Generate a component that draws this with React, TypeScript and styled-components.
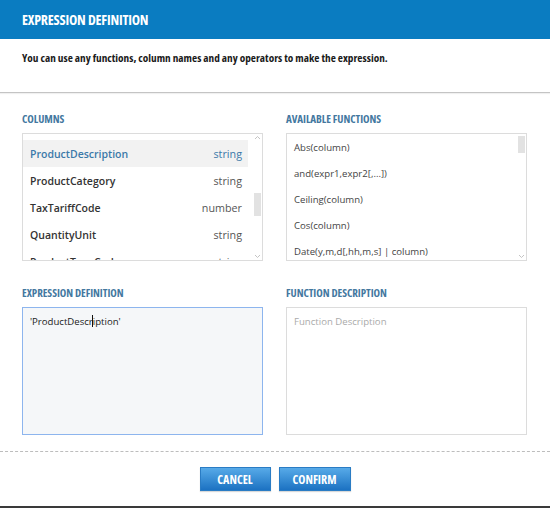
import React from "react";
import styled, { createGlobalStyle } from "styled-components";

const Global = createGlobalStyle`
  html, body { margin: 0; padding: 0; background: #fff; }
  body { font-family: "Open Sans", "Liberation Sans", sans-serif; }
  * { box-sizing: border-box; }
`;

const Dialog = styled.div`
  width: 550px;
  height: 508px;
  display: flex;
  flex-direction: column;
  background: #fff;
  overflow: hidden;
`;

const Header = styled.div`
  height: 39px;
  flex: none;
  display: flex;
  align-items: center;
  padding-left: 22px;
  background: #0a7cc1;
  color: #fff;
  font-size: 14px;
  font-weight: 700;
  font-stretch: condensed;
  letter-spacing: -0.2px;
`;

const Intro = styled.div`
  height: 54px;
  flex: none;
  padding: 12px 22px 0;
  font-size: 11.25px;
  line-height: 14px;
  font-weight: 700;
  font-stretch: condensed;
  color: #1a1a1a;
  border-bottom: 1px solid #c4c4c4;
  box-shadow: 0 1px 1px rgba(0, 0, 0, 0.06);
`;

const Main = styled.div`
  display: grid;
  grid-template-columns: 241px 241px;
  column-gap: 23px;
  row-gap: 25px;
  padding: 19px 22px 0;
`;

const Section = styled.div`
  display: flex;
  flex-direction: column;
`;

const Label = styled.div`
  height: 14px;
  line-height: 14px;
  margin-bottom: 7px;
  font-size: 11px;
  font-weight: 700;
  font-stretch: condensed;
  color: #44789f;
  letter-spacing: -0.05px;
`;

const Box = styled.div<{ $focus?: boolean }>`
  position: relative;
  height: 128px;
  border: 1px solid ${(p) => (p.$focus ? "#8db5ee" : "#dcdcdc")};
  background: ${(p) => (p.$focus ? "#f5f7f9" : "#fff")};
  overflow: hidden;
`;

const ColumnList = styled.div`
  padding: 6px 14px 0 0;
`;

const ColumnRow = styled.div<{ $active?: boolean }>`
  height: 27px;
  display: flex;
  align-items: center;
  justify-content: space-between;
  padding: 0 6px 0 7px;
  font-size: 10.5px;
  background: ${(p) => (p.$active ? "#f2f2f2" : "transparent")};
  color: ${(p) => (p.$active ? "#3b79a9" : "#333")};
`;

const ColName = styled.span`
  font-weight: 600;
`;

const ColType = styled.span<{ $active?: boolean }>`
  font-size: 10.75px;
  color: ${(p) => (p.$active ? "#3b79a9" : "#555")};
`;

const FuncList = styled.div`
  padding: 0 16px 0 0;
`;

const FuncRow = styled.div`
  height: 26px;
  display: flex;
  align-items: center;
  padding-left: 7px;
  font-size: 9.6px;
  color: #444;
  white-space: nowrap;
`;

const Track = styled.div`
  position: absolute;
  top: 0;
  right: 1px;
  bottom: 0;
  width: 7px;
`;

const Thumb = styled.div`
  position: absolute;
  left: 0;
  right: 0;
  background: #e2e2e2;
`;

const Arrow = styled.svg<{ $down?: boolean }>`
  position: absolute;
  left: 0;
  ${(p) => (p.$down ? "bottom: 1px;" : "top: 1px;")}
  width: 7px;
  height: 5px;
`;

const TextArea = styled.div`
  padding: 7px 7px;
  font-size: 9.6px;
  line-height: 14px;
  color: #222;
`;

const Caret = styled.span`
  display: inline-block;
  width: 1px;
  height: 12px;
  margin: 0 -0.5px;
  vertical-align: -2px;
  background: #111;
`;

const Placeholder = styled.div`
  padding: 7px 7px;
  font-size: 9.6px;
  line-height: 14px;
  color: #aaa;
`;

const Footer = styled.div`
  margin-top: 16px;
  border-top: 1px dashed #bdbdbd;
  height: 57px;
  display: flex;
  justify-content: center;
  align-items: flex-start;
  gap: 8px;
  padding-top: 15px;
  border-bottom: 2px solid #3a3a3a;
  flex: none;
`;

const Button = styled.button<{ $w: number }>`
  width: ${(p) => p.$w}px;
  height: 24px;
  border: 1px solid #2a7cc4;
  background: linear-gradient(#57aae8, #1c72c2);
  color: #fff;
  font-family: "Open Sans", "Liberation Sans", sans-serif;
  font-size: 12px;
  font-weight: 700;
  font-stretch: condensed;
  padding: 0;
  cursor: pointer;
  box-shadow: 0 1px 1px rgba(0, 0, 0, 0.15);
`;

function Scroll({ top, height }: { top: number; height: number }) {
  return (
    <Track>
      <Arrow viewBox="0 0 7 5">
        <path d="M1 4 L3.5 1.5 L6 4" fill="none" stroke="#c4c4c4" strokeWidth="1" />
      </Arrow>
      <Thumb style={{ top, height }} />
      <Arrow $down viewBox="0 0 7 5">
        <path d="M1 1 L3.5 3.5 L6 1" fill="none" stroke="#c4c4c4" strokeWidth="1" />
      </Arrow>
    </Track>
  );
}

const columns = [
  { name: "ProductDescription", type: "string", active: true },
  { name: "ProductCategory", type: "string" },
  { name: "TaxTariffCode", type: "number" },
  { name: "QuantityUnit", type: "string" },
  { name: "ProductTypeCode", type: "string" },
];

const functions = [
  "Abs(column)",
  "and(expr1,expr2[,...])",
  "Ceiling(column)",
  "Cos(column)",
  "Date(y,m,d[,hh,m,s] | column)",
];

export default function App() {
  return (
    <Dialog>
      <Global />
      <Header>EXPRESSION DEFINITION</Header>
      <Intro>You can use any functions, column names and any operators to make the expression.</Intro>
      <Main>
        <Section>
          <Label>COLUMNS</Label>
          <Box>
            <ColumnList>
              {columns.map((c) => (
                <ColumnRow key={c.name} $active={c.active}>
                  <ColName>{c.name}</ColName>
                  <ColType $active={c.active}>{c.type}</ColType>
                </ColumnRow>
              ))}
            </ColumnList>
            <Scroll top={59} height={23} />
          </Box>
        </Section>
        <Section>
          <Label>AVAILABLE FUNCTIONS</Label>
          <Box>
            <FuncList>
              {functions.map((f) => (
                <FuncRow key={f}>{f}</FuncRow>
              ))}
            </FuncList>
            <Scroll top={2} height={17} />
          </Box>
        </Section>
        <Section>
          <Label>EXPRESSION DEFINITION</Label>
          <Box $focus>
            <TextArea>
              'ProductDescr<Caret />iption'
            </TextArea>
          </Box>
        </Section>
        <Section>
          <Label>FUNCTION DESCRIPTION</Label>
          <Box>
            <Placeholder>Function Description</Placeholder>
          </Box>
        </Section>
      </Main>
      <Footer>
        <Button $w={71}>CANCEL</Button>
        <Button $w={72}>CONFIRM</Button>
      </Footer>
    </Dialog>
  );
}
